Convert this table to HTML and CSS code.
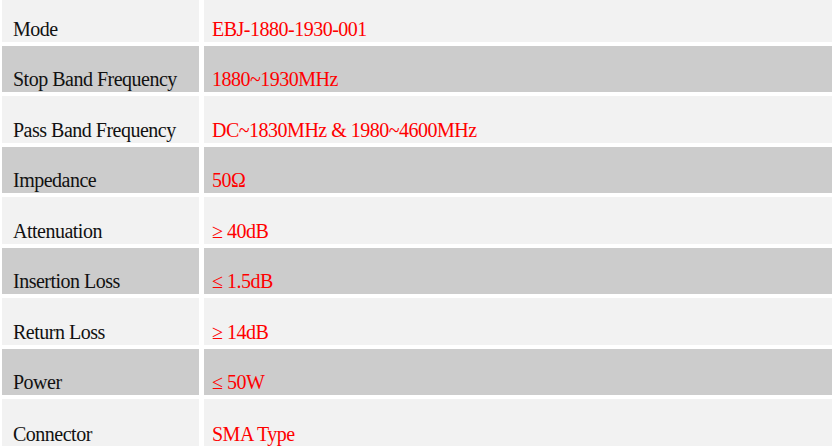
FILE: index.html
```html
<!DOCTYPE html>
<html>
<head>
<meta charset="utf-8">
<link rel="stylesheet" href="styles.css">
</head>
<body>
<div class="spec">
  <div class="cell label light">Mode</div><div class="cell value light">EBJ-1880-1930-001</div>
  <div class="cell label dark">Stop Band Frequency</div><div class="cell value dark">1880~1930MHz</div>
  <div class="cell label light">Pass Band Frequency</div><div class="cell value light">DC~1830MHz &amp; 1980~4600MHz</div>
  <div class="cell label dark">Impedance</div><div class="cell value dark">50Ω</div>
  <div class="cell label light">Attenuation</div><div class="cell value light">≥ 40dB</div>
  <div class="cell label dark">Insertion Loss</div><div class="cell value dark">≤ 1.5dB</div>
  <div class="cell label light">Return Loss</div><div class="cell value light">≥ 14dB</div>
  <div class="cell label dark">Power</div><div class="cell value dark">≤ 50W</div>
  <div class="cell label light last">Connector</div><div class="cell value light last">SMA Type</div>
</div>
</body>
</html>
```
FILE: styles.css
```css
html, body {
  margin: 0;
  padding: 0;
  background: #ffffff;
  overflow: hidden;
}
.spec {
  display: grid;
  grid-template-columns: 197px 640px;
  grid-template-rows: 42px repeat(7, 46.43px) 60px;
  column-gap: 5px;
  row-gap: 4px;
  padding-left: 2px;
  font-family: "Liberation Serif", "Times New Roman", serif;
  font-size: 20px;
  letter-spacing: -0.5px;
  line-height: 20px;
}
.cell {
  display: flex;
  align-items: flex-end;
  padding-bottom: 3px;
  box-sizing: border-box;
  white-space: nowrap;
}
.cell.last {
  align-items: flex-start;
  padding-top: 25px;
  padding-bottom: 0;
}
.light { background: #f2f2f2; }
.dark { background: #cccccc; }
.label {
  color: #111111;
  padding-left: 11px;
}
.value {
  color: #ff0000;
  padding-left: 8px;
}
```
